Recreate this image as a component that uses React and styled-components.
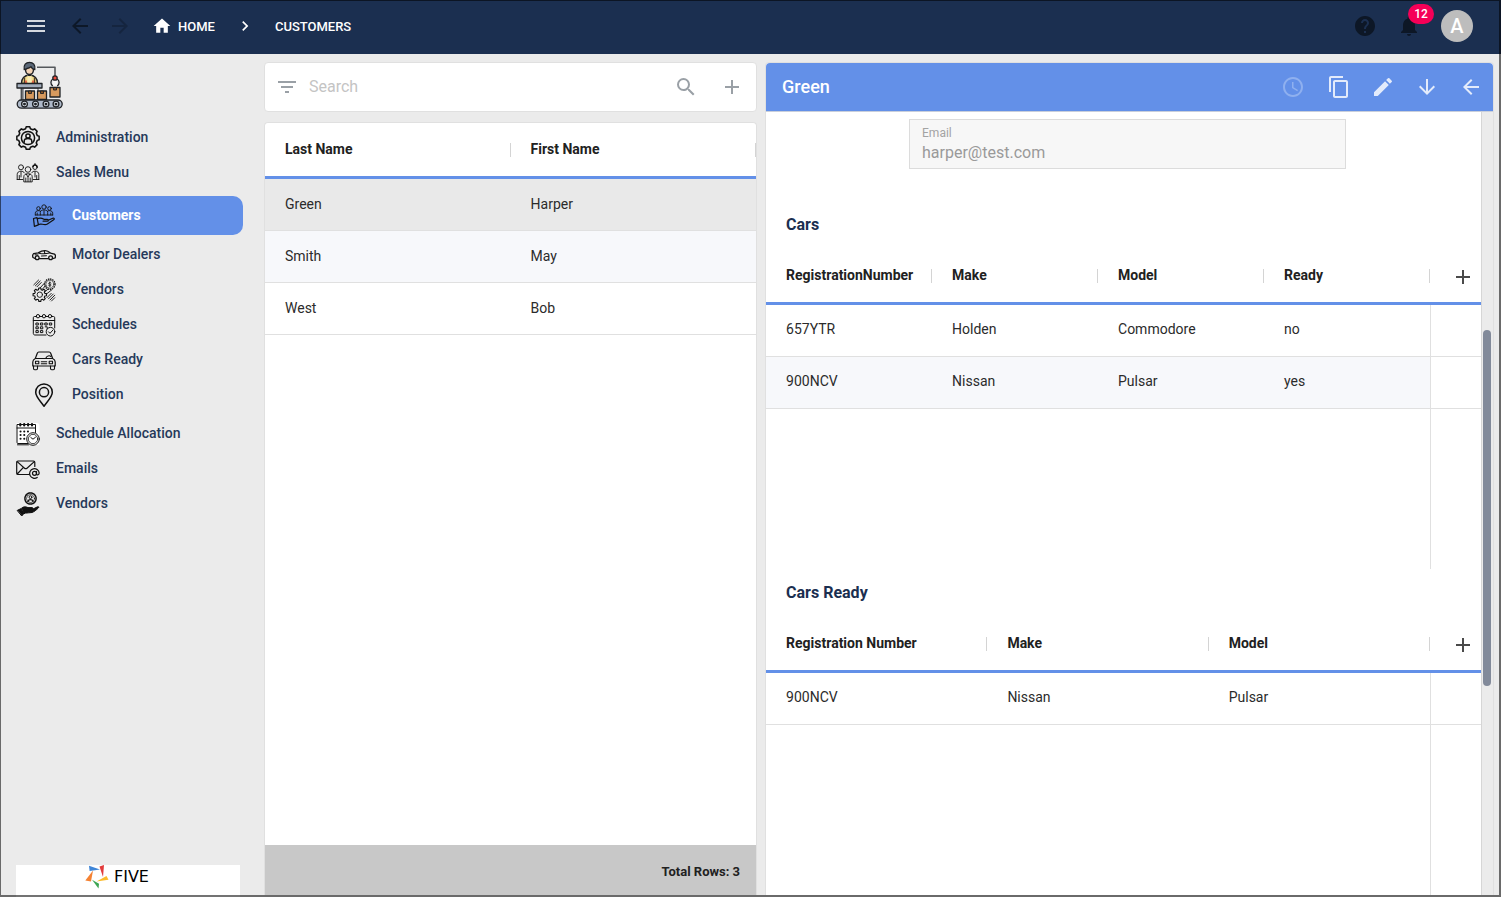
import React from "react";
import styled, { createGlobalStyle } from "styled-components";
import {
  MdMenu,
  MdArrowBack,
  MdArrowForward,
  MdHome,
  MdChevronRight,
  MdHelp,
  MdNotifications,
  MdAccessTime,
  MdContentCopy,
  MdEdit,
  MdArrowDownward,
  MdFilterList,
  MdSearch,
  MdAdd,
} from "react-icons/md";

const NAVY = "#1b2f50";
const BLUE = "#6390e8";
const PAGE = "#ebebeb";
const LINE = "#e0e0e0";

const GlobalStyle = createGlobalStyle`
  *, *::before, *::after { box-sizing: border-box; }
  body {
    margin: 0;
    background: ${PAGE};
    font-family: Roboto, "Liberation Sans", sans-serif;
    font-size: 14px;
    color: #212121;
  }
  button { border: 0; padding: 0; background: none; font: inherit; cursor: pointer; }
  svg { display: block; }
`;

const Page = styled.div`
  display: flex;
  flex-direction: column;
  height: 100vh;
  overflow: hidden;
  &::after {
    content: "";
    position: fixed;
    inset: 0;
    border: solid rgba(0, 0, 0, 0.55);
    border-width: 1px 2px 2px 1px;
    pointer-events: none;
  }
`;

/* ---------- top bar ---------- */

const TopBar = styled.header`
  display: flex;
  align-items: center;
  justify-content: space-between;
  flex: none;
  height: 54px;
  padding: 0 28px 2px 24px;
  background: ${NAVY};
`;

const TopGroup = styled.div`
  display: flex;
  align-items: center;
  gap: ${(p) => p.$gap}px;
`;

const IconButton = styled.button`
  display: flex;
  align-items: center;
  justify-content: center;
  width: ${(p) => p.$width || 24}px;
  height: 24px;
  color: ${(p) => p.$color};
  font-size: 24px;
`;

const Crumbs = styled.nav`
  display: flex;
  align-items: center;
  gap: 20px;
  color: #fff;
  font-size: 20px;
`;

const Crumb = styled.a`
  display: flex;
  align-items: center;
  gap: 6px;
  color: #fff;
  font-size: 13px;
  font-weight: 500;
  text-decoration: none;
`;

const BellWrap = styled.div`
  position: relative;
`;

const Badge = styled.span`
  position: absolute;
  left: 11px;
  top: -10px;
  min-width: 26px;
  height: 20px;
  border-radius: 10px;
  background: #f50057;
  color: #fff;
  font-size: 12px;
  font-weight: 500;
  line-height: 20px;
  text-align: center;
`;

const Avatar = styled.button`
  width: 32px;
  height: 32px;
  border-radius: 50%;
  && { background: #bdbdbd; font-size: 20px; font-weight: 500; }
  color: #fff;
  line-height: 32px;
`;

/* ---------- frame ---------- */

const Body = styled.div`
  display: grid;
  grid-template-columns: 264px minmax(0, 1fr);
  flex: 1;
  min-height: 0;
`;

const Sidebar = styled.aside`
  display: flex;
  flex-direction: column;
  min-height: 0;
`;

const Brand = styled.div`
  padding: 7px 16px 11px;
`;

const Nav = styled.nav`
  flex: 1;
`;

const SubMenu = styled.div`
  padding: 4px 0;
`;

const NavItem = styled.a`
  display: flex;
  align-items: center;
  gap: 16px;
  height: ${(p) => (p.$active ? 39 : 35)}px;
  margin: ${(p) => (p.$active ? "2px 21px 2px 0" : "0")};
  padding: 0 0 2px ${(p) => (p.$sub ? 32 : 16)}px;
  border-radius: 0 10px 10px 0;
  background: ${(p) => (p.$active ? BLUE : "transparent")};
  color: ${(p) => (p.$active ? "#fff" : "#26395a")};
  font-size: 14px;
  font-weight: ${(p) => (p.$active ? 700 : 500)};
  line-height: 20px;
  text-decoration: none;
  svg { margin-top: 3px; color: #111; }
`;

const Powered = styled.div`
  display: flex;
  justify-content: center;
  height: 32px;
  margin: 0 24px 0 16px;
  background: #fff;
`;

const Lockup = styled.div`
  display: flex;
  gap: 5px;
  width: 86px;
  height: 24px;
  font-family: "DejaVu Sans", sans-serif;
  font-size: 16px;
  line-height: 24px;
  color: #000;
`;

const Content = styled.main`
  display: grid;
  grid-template-columns: minmax(0, 23fr) minmax(0, 34fr);
  gap: 8px;
  min-height: 0;
  padding: 8px 7px 2px 0;
`;

const ListColumn = styled.section`
  display: flex;
  flex-direction: column;
  gap: 10px;
  min-height: 0;
`;

/* ---------- list ---------- */

const SearchCard = styled.form`
  display: flex;
  align-items: center;
  flex: none;
  gap: 10px;
  height: 50px;
  padding: 0 12px 0 10px;
  border: 1px solid ${LINE};
  border-radius: 4px;
  background: #fff;
`;

const SearchInput = styled.input`
  flex: 1;
  min-width: 0;
  padding: 0;
  border: 0;
  outline: 0;
  background: none;
  font: 400 16px/20px Roboto, sans-serif;
  &::placeholder { color: #c4c4c4; opacity: 1; }
`;

const SearchActions = styled.div`
  display: flex;
  gap: 22px;
`;

const ListCard = styled.div`
  display: flex;
  flex-direction: column;
  flex: 1;
  min-height: 0;
  border: 1px solid ${LINE};
  border-bottom: 0;
  border-radius: 4px 4px 0 0;
  background: #fff;
`;

const Grid = styled.table`
  --lift: ${(p) => (p.$related ? 4 : 2)}px;
  width: 100%;
  table-layout: fixed;
  border-collapse: separate;
  border-spacing: 0;
`;

const Head = styled.th`
  height: ${(p) => p.$height}px;
  padding: 0 0 ${(p) => (p.$height === 56 ? 2 : 0)}px ${(p) => (p.$action ? 0 : 20)}px;
  border-bottom: 3px solid ${BLUE};
  font-size: 14px;
  font-weight: 700;
  line-height: 20px;
  text-align: left;
  white-space: nowrap;
`;

const HeadInner = styled.div`
  display: flex;
  align-items: center;
  justify-content: space-between;
`;

const Divider = styled.i`
  width: 1px;
  height: 14px;
  margin-top: 2px;
  background: #d4d4d4;
`;

const AddInner = styled.div`
  display: flex;
  justify-content: flex-end;
  padding: 4px 6px 0 0;
`;

const Row = styled.tr`
  --fill: ${(p) => (p.$selected ? "#e9e9e9" : p.$shade ? "#f7f8fb" : "#fff")};
`;

const Cell = styled.td`
  height: 52px;
  padding: 0 0 var(--lift) 20px;
  border-bottom: 1px solid ${LINE};
  background: var(--fill);
  color: #2b2b2b;
  line-height: 20px;
`;

const ActionCell = styled(Cell)`
  border-left: 1px solid ${LINE};
  background: #fff;
`;

const ListFooter = styled.footer`
  display: flex;
  align-items: center;
  justify-content: flex-end;
  height: 50px;
  margin-top: auto;
  padding: 4px 16px 0;
  background: #c8c8c8;
  font-size: 13px;
  font-weight: 700;
  line-height: 20px;
`;

/* ---------- detail ---------- */

const Detail = styled.section`
  display: flex;
  flex-direction: column;
  min-height: 0;
  border: 1px solid ${LINE};
  border-bottom: 0;
  border-radius: 4px 4px 0 0;
  background: #fff;
`;

const DetailHead = styled.header`
  display: flex;
  align-items: center;
  justify-content: space-between;
  flex: none;
  height: 49px;
  padding-left: 16px;
  border-bottom: 1px solid #c9cfdb;
  border-radius: 4px 4px 0 0;
  background: ${BLUE};
`;

const DetailTitle = styled.h1`
  margin: 0;
  color: #fff;
  font-size: 18px;
  font-weight: 500;
  line-height: 24px;
`;

const Actions = styled.div`
  display: flex;
`;

const DetailMain = styled.div`
  display: flex;
  flex: 1;
  min-height: 0;
`;

const Scroller = styled.div`
  flex: 1;
  min-width: 0;
  overflow-y: auto;
  scrollbar-width: none;
`;

const Track = styled.div`
  display: flex;
  flex-direction: column;
  width: 12px;
  padding-left: 1px;
  border-left: 1px solid #d6d6d6;
  background: ${PAGE};
`;

const TrackSpace = styled.div`
  flex: ${(p) => p.$part};
`;

const Thumb = styled.div`
  flex: 356;
  width: 8px;
  border-radius: 4px;
  background: #828a9a;
`;

const FieldRow = styled.div`
  display: flex;
  justify-content: center;
  padding: 7px 0 32px 8px;
`;

const Field = styled.div`
  display: flex;
  flex-direction: column;
  gap: 1px;
  width: 62%;
  max-width: 437px;
  height: 50px;
  padding: 4px 12px;
  border: 1px solid #dcdcdc;
  background: #f7f7f7;
`;

const FieldLabel = styled.label`
  color: #a3a3a3;
  font-size: 12px;
  line-height: 18px;
`;

const FieldInput = styled.input`
  width: 100%;
  padding: 0;
  border: 0;
  background: none;
  color: #9a9a9a;
  font: 400 16px/20px Roboto, sans-serif;
`;

const Section = styled.section`
  display: flex;
  flex-direction: column;
  height: 368px;
`;

const SectionTitle = styled.h2`
  margin: 0;
  padding-left: 20px;
  color: ${NAVY};
  font-size: 16px;
  font-weight: 700;
  line-height: 47px;
`;

const Filler = styled.div`
  flex: 1;
  width: 51px;
  margin-left: auto;
  border-left: 1px solid ${LINE};
`;

/* ---------- drawings ---------- */

const Line = ({ children, width = 1.2, ...rest }) => (
  <svg
    width="24"
    height="24"
    viewBox="0 0 24 24"
    fill="none"
    stroke="currentColor"
    strokeWidth={width}
    strokeLinejoin="round"
    strokeLinecap="round"
    aria-hidden="true"
    {...rest}
  >
    {children}
  </svg>
);

const gearPath = (cx, cy, outer, inner, teeth) => {
  const step = (Math.PI * 2) / teeth;
  const at = (r, a) => `${(cx + r * Math.cos(a)).toFixed(2)} ${(cy + r * Math.sin(a)).toFixed(2)}`;
  let d = "";
  for (let i = 0; i < teeth; i += 1) {
    const a = i * step - Math.PI / 2;
    d += `${i ? "L" : "M"}${at(inner, a - step * 0.32)}L${at(outer, a - step * 0.2)}L${at(outer, a + step * 0.2)}L${at(inner, a + step * 0.32)}`;
  }
  return `${d}Z`;
};

const AdminIcon = () => (
  <Line width="1.5">
    <path d={gearPath(12, 12, 11.3, 9.6, 8)} />
    <circle cx="12" cy="12" r="6.6" />
    <circle cx="12" cy="10" r="2.1" />
    <path d="M8.2 16.2v-1c0-1.6 1.5-2.6 3.8-2.6s3.8 1 3.8 2.6v1" />
  </Line>
);

const SalesIcon = () => (
  <Line width=".9">
    <circle cx="5" cy="6.3" r="2.5" />
    <circle cx="19" cy="6.3" r="2.2" />
    <path d="M17 5.600c.2-2.400 3.800-2.400 4 0M19 3v1" strokeWidth="1.600" />
    <circle cx="12" cy="8.500" r="2.800" />
    <path d="M1.200 18.500v-5c0-2 1.400-3.300 3.800-3.300 1.600 0 2.700.500 3.300 1.600M3.300 18.500v-4M1.200 18.500h5.500M5 11v5M22.800 18.500v-5c0-2-1.400-3.300-3.800-3.300-1.600 0-2.700.500-3.300 1.600M20.700 18.500v-4M22.800 18.500h-5.500M19 11v5" />
    <path d="M7.800 20.500v-4.700c0-2 1.600-3 4.200-3s4.200 1 4.200 3v4.700zM10.200 13l1.800 3 1.800-3M12 16v4.500M9.800 17v3.500M14.200 17v3.500" />
  </Line>
);

const CustomersIcon = () => (
  <Line width=".9">
    <circle cx="6.500" cy="4.500" r="1.800" />
    <circle cx="17.500" cy="4.500" r="1.800" />
    <circle cx="12" cy="3" r="2.200" />
    <path d="M3.300 11v-1.800c0-1.600 1.200-2.500 3.200-2.500 1 0 1.700.2 2.200.6M20.700 11v-1.800c0-1.600-1.200-2.500-3.200-2.500-1 0-1.700.2-2.200.6M8.300 11V8.500c0-1.700 1.400-2.500 3.700-2.500s3.700.8 3.700 2.500V11M3.300 11h17.400M12 7v4M5.200 9v2M18.800 9v2" />
    <path d="M1.500 14.500l3.500-.8 1.400 7.200-4 1.500zM5.200 15c2.600-1.600 4.500-1 6.800.3h3.300c1.400 0 1.400 1.900 0 1.900h-4.200M16.200 16.200l4.500-2c1.500-.5 2.200.8 1 1.600l-6.300 4.200c-1.200.8-2.200.8-3.600.5l-3-.5-2.600.6" strokeWidth="1.200" />
  </Line>
);

const MotorIcon = () => (
  <Line width="1.300">
    <path d="M3 15.500l-2-1c-.6-1.600-.3-3 .6-3.900l4.600-.7c2.600-1.800 4.300-2.300 7-2.300 2 0 3.600 1 5.300 2.500l4 1c.8.500 1 2.500.7 3.800l-2 .6M7.500 15.600h8.700" />
    <circle cx="5.200" cy="14.800" r="1.900" />
    <circle cx="18.600" cy="14.800" r="1.900" />
    <path d="M7 10.200c3.500.8 7 .7 10.500-.2M12.300 7.800l.5 2.800M3 11.700l3 .4M9.500 13l5-.3" strokeWidth="1.100" />
  </Line>
);

const VendorsIcon = () => (
  <Line width=".9">
    <path d={gearPath(7.800, 16.700, 6.800, 5.200, 8)} strokeWidth="1.100" />
    <circle cx="7.800" cy="16.700" r="2.700" />
    <circle cx="17.800" cy="6.200" r="5.200" strokeWidth="1.300" strokeDasharray="1.400 .8" strokeLinecap="butt" />
    <circle cx="17.800" cy="6.200" r="4" strokeWidth=".6" />
    <path d="M19 5c-.6-.8-2.400-.5-2.300.4.100 1.100 2.300.5 2.300 1.700 0 1-1.800 1.100-2.500.2M17.800 3.900v4.600" strokeWidth=".8" />
    <path d="M1.800 6.800l4.800-4.800M3.400 7.800l4.800-4.800M5 8.800l4.300-4.300" />
    <path d="M15 19.600l4.300-4.300M16.500 20.800l4.800-4.800M18 22l4.800-4.800M19.500 23l3.300-3.300" />
    <path d="M8 10l4.600-5M10.200 11.300l3.300-3.500M13 13.500l3-2.300M14.500 16l5.300-4.200" />
  </Line>
);

const ScheduleIcon = () => (
  <Line width="1">
    <path d="M14 22H3c-1 0-1.700-.6-1.700-1.600V4.700C1.300 4 1.800 3.500 2.500 3.500h2M7.500 3.500h3M13.500 3.500h3M19.500 3.500h2c.8 0 1.200.5 1.200 1.200V15M1.300 7.500h21.400" />
    <circle cx="6" cy="3.200" r="1.700" />
    <circle cx="12" cy="3.200" r="1.700" />
    <circle cx="18" cy="3.200" r="1.700" />
    <path d="M4.300 10h2v2h-2zM8.800 10h2v2h-2zM13.200 10h2v2h-2zM17.700 10h2v2h-2zM4.300 13.800h2v2h-2zM8.800 13.800h2v2h-2zM13.200 13.800h2v2M4.300 17.600h2v2h-2zM8.800 17.600h2v2h-2z" />
    <circle cx="18.500" cy="18.700" r="4.300" />
    <path d="M16.500 18.800l1.500 1.500 2.700-3" />
  </Line>
);

const CarIcon = () => (
  <Line width="1.200">
    <path d="M3.300 10.500l2-5.300c.3-.8.700-1.200 1.500-1.200h10.400c.8 0 1.200.4 1.500 1.200l2 5.300M3.300 10.500h17.400c1.500.7 2.500 2 2.500 3.500v4H.8v-4c0-1.500 1-2.800 2.500-3.500z" />
    <path d="M1.500 18v2.500c0 .8.400 1.200 1.200 1.200h1.600c.8 0 1.200-.4 1.200-1.200V18M18.500 18v2.500c0 .8.400 1.200 1.200 1.200h1.600c.8 0 1.200-.4 1.200-1.200V18M3.500 13.200h3.300v2.600H3.500zM17.200 13.200h3.300v2.600h-3.300zM9.300 13.800h5.400M9.300 15.800h5.400M14 10c.5-2 3.500-3 5-1.300" strokeWidth="1.100" />
  </Line>
);

const PinIcon = () => (
  <Line width="1.500">
    <path d="M12 23.200C8 17.500 3.700 13.700 3.700 9.200a8.300 8.300 0 0 1 16.600 0c0 4.500-4.300 8.300-8.300 14z" />
    <circle cx="12" cy="9.200" r="4.600" />
  </Line>
);

const AllocationIcon = () => (
  <Line width="1">
    <path d="M.5 1h20c2 0 3 1 3 3v19h-12l-11-1z" fill="#fff" stroke="none" />
    <path d="M12 21.500H2c-.7 0-1-.3-1-1V2.500h18.500v8M1 6h18.500M1.500 22.800h11" />
    <path d="M4.300 2v1.500M8.200 2v1.500M12.100 2v1.500M16 2v1.500" strokeWidth="2.200" />
    <path d="M4.500 9.500h.1M8.200 9.500h.1M11.900 9.500h.1M4.500 13h.1M8.200 13h.1M4.500 16.800h.1M8.200 16.800h.1" strokeWidth="2" />
    <circle cx="17" cy="17" r="6.300" fill="#fff" />
    <circle cx="17" cy="17" r="4.700" strokeWidth=".8" />
    <path d="M14.800 15.500l2.200 1.700 2.500-2" />
  </Line>
);

const EmailIcon = () => (
  <Line width="1.200">
    <path d="M13 17.500H2c-.8 0-1.300-.5-1.300-1.300V5.300C.7 4.500 1.200 4 2 4h15.500c.8 0 1.300.5 1.300 1.300V9.500M1.200 4.600l7.300 6.600c.8.700 1.700.700 2.500 0l7.300-6.600M1.200 17l6-6.300" />
    <circle cx="18.500" cy="16.300" r="2" />
    <path d="M20.500 14.300v2.600c0 1.500 2.700 1.300 2.700-.8a4.800 4.800 0 1 0-2 4.300" />
  </Line>
);

const HandIcon = () => (
  <Line width="1">
    <circle cx="14.500" cy="6.500" r="5.600" strokeWidth="1.500" strokeDasharray="2 .5" />
    <circle cx="14.500" cy="6.500" r="4" strokeWidth=".7" />
    <circle cx="14.500" cy="5.200" r="1.400" />
    <path d="M12 9.400c.3-1.400 1.200-1.800 2.500-1.800s2.200.4 2.500 1.800" strokeWidth="1.400" />
    <path d="M1.500 18.300l3.300-1.600 3 4.800-1.800 2.200zM5.500 16.200c2-1.800 4.200-1.700 6.500-.6h4c1.300 0 1.300 1.700 0 1.700h-3.500 4l5-2.500c1.200-.6 1.700.5.800 1.200-2 2-4 3.700-6.300 4.500-2.300.5-4.500.2-6.500.6l-1.500.6z" fill="currentColor" />
  </Line>
);

const BrandMark = () => (
  <svg width="48" height="48" viewBox="0 0 48 48" stroke="#1f2226" strokeWidth="1.300" strokeLinejoin="round" role="img" aria-label="Factory">
    <path d="M21 6.200h18V15" fill="none" stroke="#55585c" strokeWidth="1.600" />
    <path d="M36.800 25c-2.800-1.800-2.300-5.800.2-7M41.200 25c2.800-1.800 2.300-5.800-.2-7" fill="none" />
    <path d="M37 19.500h4v5h-4z" fill="#f6f6f6" stroke="none" />
    <circle cx="39" cy="17" r="2.200" fill="#ef4b3c" />
    <path d="M5.500 22.500c0-5 2.500-8 8-8.500 5.500.5 8 3.500 8 8.500z" fill="#f4dd8c" />
    <path d="M8.500 16.500v6M18.500 16.500v6" stroke="#54402a" strokeWidth="1.400" />
    <path d="M10 19.500v3M17 19.500v3" stroke="#e2533a" strokeWidth="1.600" />
    <path d="M11.500 14l2 2.500 2-2.500v8h-4z" fill="#f7ecb8" stroke="none" />
    <path d="M9.500 8c0 3 1.500 5.500 4 5.500s4-2.500 4-5.500l-1-3h-6z" fill="#f3d3b6" />
    <path d="M8.200 8.500C7.300 4 10 1.300 13.500 1.300S19.700 4 18.800 8.500c-1.500 0-3-1-3.800-2.700-1.500 1.200-2.600 1.500-4 1.700-.8.800-1.800 1-2.800 1z" fill="#5b6878" />
    <path d="M5.500 27v12" stroke="#4a4d52" strokeWidth="1.800" />
    <path d="M7 27h15v12H7z" fill="#f0f1f3" strokeWidth=".8" />
    <path d="M1 22.500h25V27H1z" fill="#a3aebd" />
    <path d="M9.500 30h9v8.500h-9zM21.500 30h9v8.500h-9zM34 26.500h10V36H34z" fill="#d79a5e" />
    <path d="M12.500 30h3v2.500h-3zM24.500 30h3v2.500h-3zM37.500 26.500h3V29h-3z" fill="#8b5526" strokeWidth=".9" />
    <rect x="1.200" y="39" width="45" height="8.200" rx="4.100" fill="#aeb9c9" />
    {[8.5, 19.5, 30, 40].map((x) => (
      <g key={x}>
        <circle cx={x} cy="43.100" r="2.900" fill="#dbe2ea" />
        <circle cx={x} cy="43.100" r=".8" fill="#1f2226" />
      </g>
    ))}
  </svg>
);

const FiveMark = () => (
  <svg width="24" height="24" viewBox="0 0 24 24" aria-hidden="true">
    <path d="M4 .8L15 4.600 4.600 6z" fill="#3f86d8" />
    <path d="M14.500 1.500L19 0l-1 12z" fill="#e23b3b" />
    <path d="M11.500 16.500L21.500 11l2 3.800z" fill="#fbbb2a" />
    <path d="M7 14.800l7 4-.5 4.800z" fill="#3fa653" />
    <path d="M8 5.500L6 16.500.3 15.500z" fill="#f58233" />
  </svg>
);

/* ---------- data ---------- */

const topItems = [
  { label: "Administration", Icon: AdminIcon },
  { label: "Sales Menu", Icon: SalesIcon },
];
const subItems = [
  { label: "Customers", Icon: CustomersIcon, active: true },
  { label: "Motor Dealers", Icon: MotorIcon },
  { label: "Vendors", Icon: VendorsIcon },
  { label: "Schedules", Icon: ScheduleIcon },
  { label: "Cars Ready", Icon: CarIcon },
  { label: "Position", Icon: PinIcon },
];
const bottomItems = [
  { label: "Schedule Allocation", Icon: AllocationIcon },
  { label: "Emails", Icon: EmailIcon },
  { label: "Vendors", Icon: HandIcon },
];
const customers = [
  ["Green", "Harper"],
  ["Smith", "May"],
  ["West", "Bob"],
];

const NavList = ({ items, sub }) =>
  items.map(({ label, Icon, active }) => (
    <NavItem key={label} href="#" $sub={sub} $active={active} aria-current={active ? "page" : undefined}>
      <Icon />
      {label}
    </NavItem>
  ));

const ColumnHead = ({ label, height }) => (
  <Head $height={height} scope="col">
    <HeadInner>
      {label}
      <Divider />
    </HeadInner>
  </Head>
);

const RelatedTable = ({ title, columns, rows }) => (
  <Section>
    <SectionTitle>{title}</SectionTitle>
    <Grid $related>
      <colgroup>
        {columns.map((c) => (
          <col key={c} />
        ))}
        <col width="51" />
      </colgroup>
      <thead>
        <tr>
          {columns.map((c) => (
            <ColumnHead key={c} label={c} height={57} />
          ))}
          <Head $height={57} $action>
            <AddInner>
              <IconButton type="button" $color="#4a4a4a" aria-label={`Add to ${title}`}>
                <MdAdd />
              </IconButton>
            </AddInner>
          </Head>
        </tr>
      </thead>
      <tbody>
        {rows.map((row, i) => (
          <Row key={row[0]} $shade={i % 2 === 1}>
            {row.map((value, j) => (
              <Cell key={j}>{value}</Cell>
            ))}
            <ActionCell />
          </Row>
        ))}
      </tbody>
    </Grid>
    <Filler />
  </Section>
);

export default function App() {
  return (
    <Page>
      <GlobalStyle />
      <TopBar>
        <TopGroup $gap={20}>
          <IconButton type="button" $color="#d5d9df" aria-label="Menu"><MdMenu /></IconButton>
          <TopGroup $gap={16}>
            <IconButton type="button" $color="#0d1828" aria-label="Back"><MdArrowBack /></IconButton>
            <IconButton type="button" $color="#15253f" aria-label="Forward"><MdArrowForward /></IconButton>
          </TopGroup>
          <Crumbs aria-label="Breadcrumb">
            <Crumb href="#"><MdHome size={20} />HOME</Crumb>
            <MdChevronRight />
            <Crumb href="#">CUSTOMERS</Crumb>
          </Crumbs>
        </TopGroup>
        <TopGroup $gap={20}>
          <IconButton type="button" $color="#0d1726" aria-label="Help"><MdHelp /></IconButton>
          <BellWrap>
            <IconButton type="button" $color="#0d1726" aria-label="Notifications"><MdNotifications /></IconButton>
            <Badge>12</Badge>
          </BellWrap>
          <Avatar type="button">A</Avatar>
        </TopGroup>
      </TopBar>

      <Body>
        <Sidebar>
          <Brand><BrandMark /></Brand>
          <Nav aria-label="Main">
            <NavList items={topItems} />
            <SubMenu><NavList items={subItems} sub /></SubMenu>
            <NavList items={bottomItems} />
          </Nav>
          <Powered>
            <Lockup><FiveMark />FIVE</Lockup>
          </Powered>
        </Sidebar>

        <Content>
          <ListColumn>
            <SearchCard>
              <IconButton type="button" $color="#9aa0a6" aria-label="Filter"><MdFilterList /></IconButton>
              <SearchInput placeholder="Search" aria-label="Search" />
              <SearchActions>
                <IconButton type="button" $color="#9aa0a6" aria-label="Run search"><MdSearch /></IconButton>
                <IconButton type="button" $color="#9aa0a6" aria-label="Add customer"><MdAdd /></IconButton>
              </SearchActions>
            </SearchCard>
            <ListCard>
              <Grid>
                <thead>
                  <tr>
                    <ColumnHead label="Last Name" height={56} />
                    <ColumnHead label="First Name" height={56} />
                  </tr>
                </thead>
                <tbody>
                  {customers.map(([last, first], i) => (
                    <Row key={last} $selected={i === 0} $shade={i % 2 === 1}>
                      <Cell>{last}</Cell>
                      <Cell>{first}</Cell>
                    </Row>
                  ))}
                </tbody>
              </Grid>
              <ListFooter>Total Rows: 3</ListFooter>
            </ListCard>
          </ListColumn>

          <Detail>
            <DetailHead>
              <DetailTitle>Green</DetailTitle>
              <Actions>
                <IconButton type="button" $width={48} $color="#8fb0ef" aria-label="History"><MdAccessTime /></IconButton>
                <IconButton type="button" $width={44} $color="#e3ebfb" aria-label="Copy"><MdContentCopy /></IconButton>
                <IconButton type="button" $width={44} $color="#e3ebfb" aria-label="Edit"><MdEdit /></IconButton>
                <IconButton type="button" $width={44} $color="#e3ebfb" aria-label="Next"><MdArrowDownward /></IconButton>
                <IconButton type="button" $width={44} $color="#e3ebfb" aria-label="Close"><MdArrowBack /></IconButton>
              </Actions>
            </DetailHead>
            <DetailMain>
              <Scroller>
                <FieldRow>
                  <Field>
                    <FieldLabel htmlFor="email">Email</FieldLabel>
                    <FieldInput id="email" type="email" value="harper@test.com" readOnly />
                  </Field>
                </FieldRow>
                <RelatedTable
                  title="Cars"
                  columns={["RegistrationNumber", "Make", "Model", "Ready"]}
                  rows={[
                    ["657YTR", "Holden", "Commodore", "no"],
                    ["900NCV", "Nissan", "Pulsar", "yes"],
                  ]}
                />
                <RelatedTable
                  title="Cars Ready"
                  columns={["Registration Number", "Make", "Model"]}
                  rows={[["900NCV", "Nissan", "Pulsar"]]}
                />
              </Scroller>
              <Track>
                <TrackSpace $part={218} />
                <Thumb />
                <TrackSpace $part={209} />
              </Track>
            </DetailMain>
          </Detail>
        </Content>
      </Body>
    </Page>
  );
}
